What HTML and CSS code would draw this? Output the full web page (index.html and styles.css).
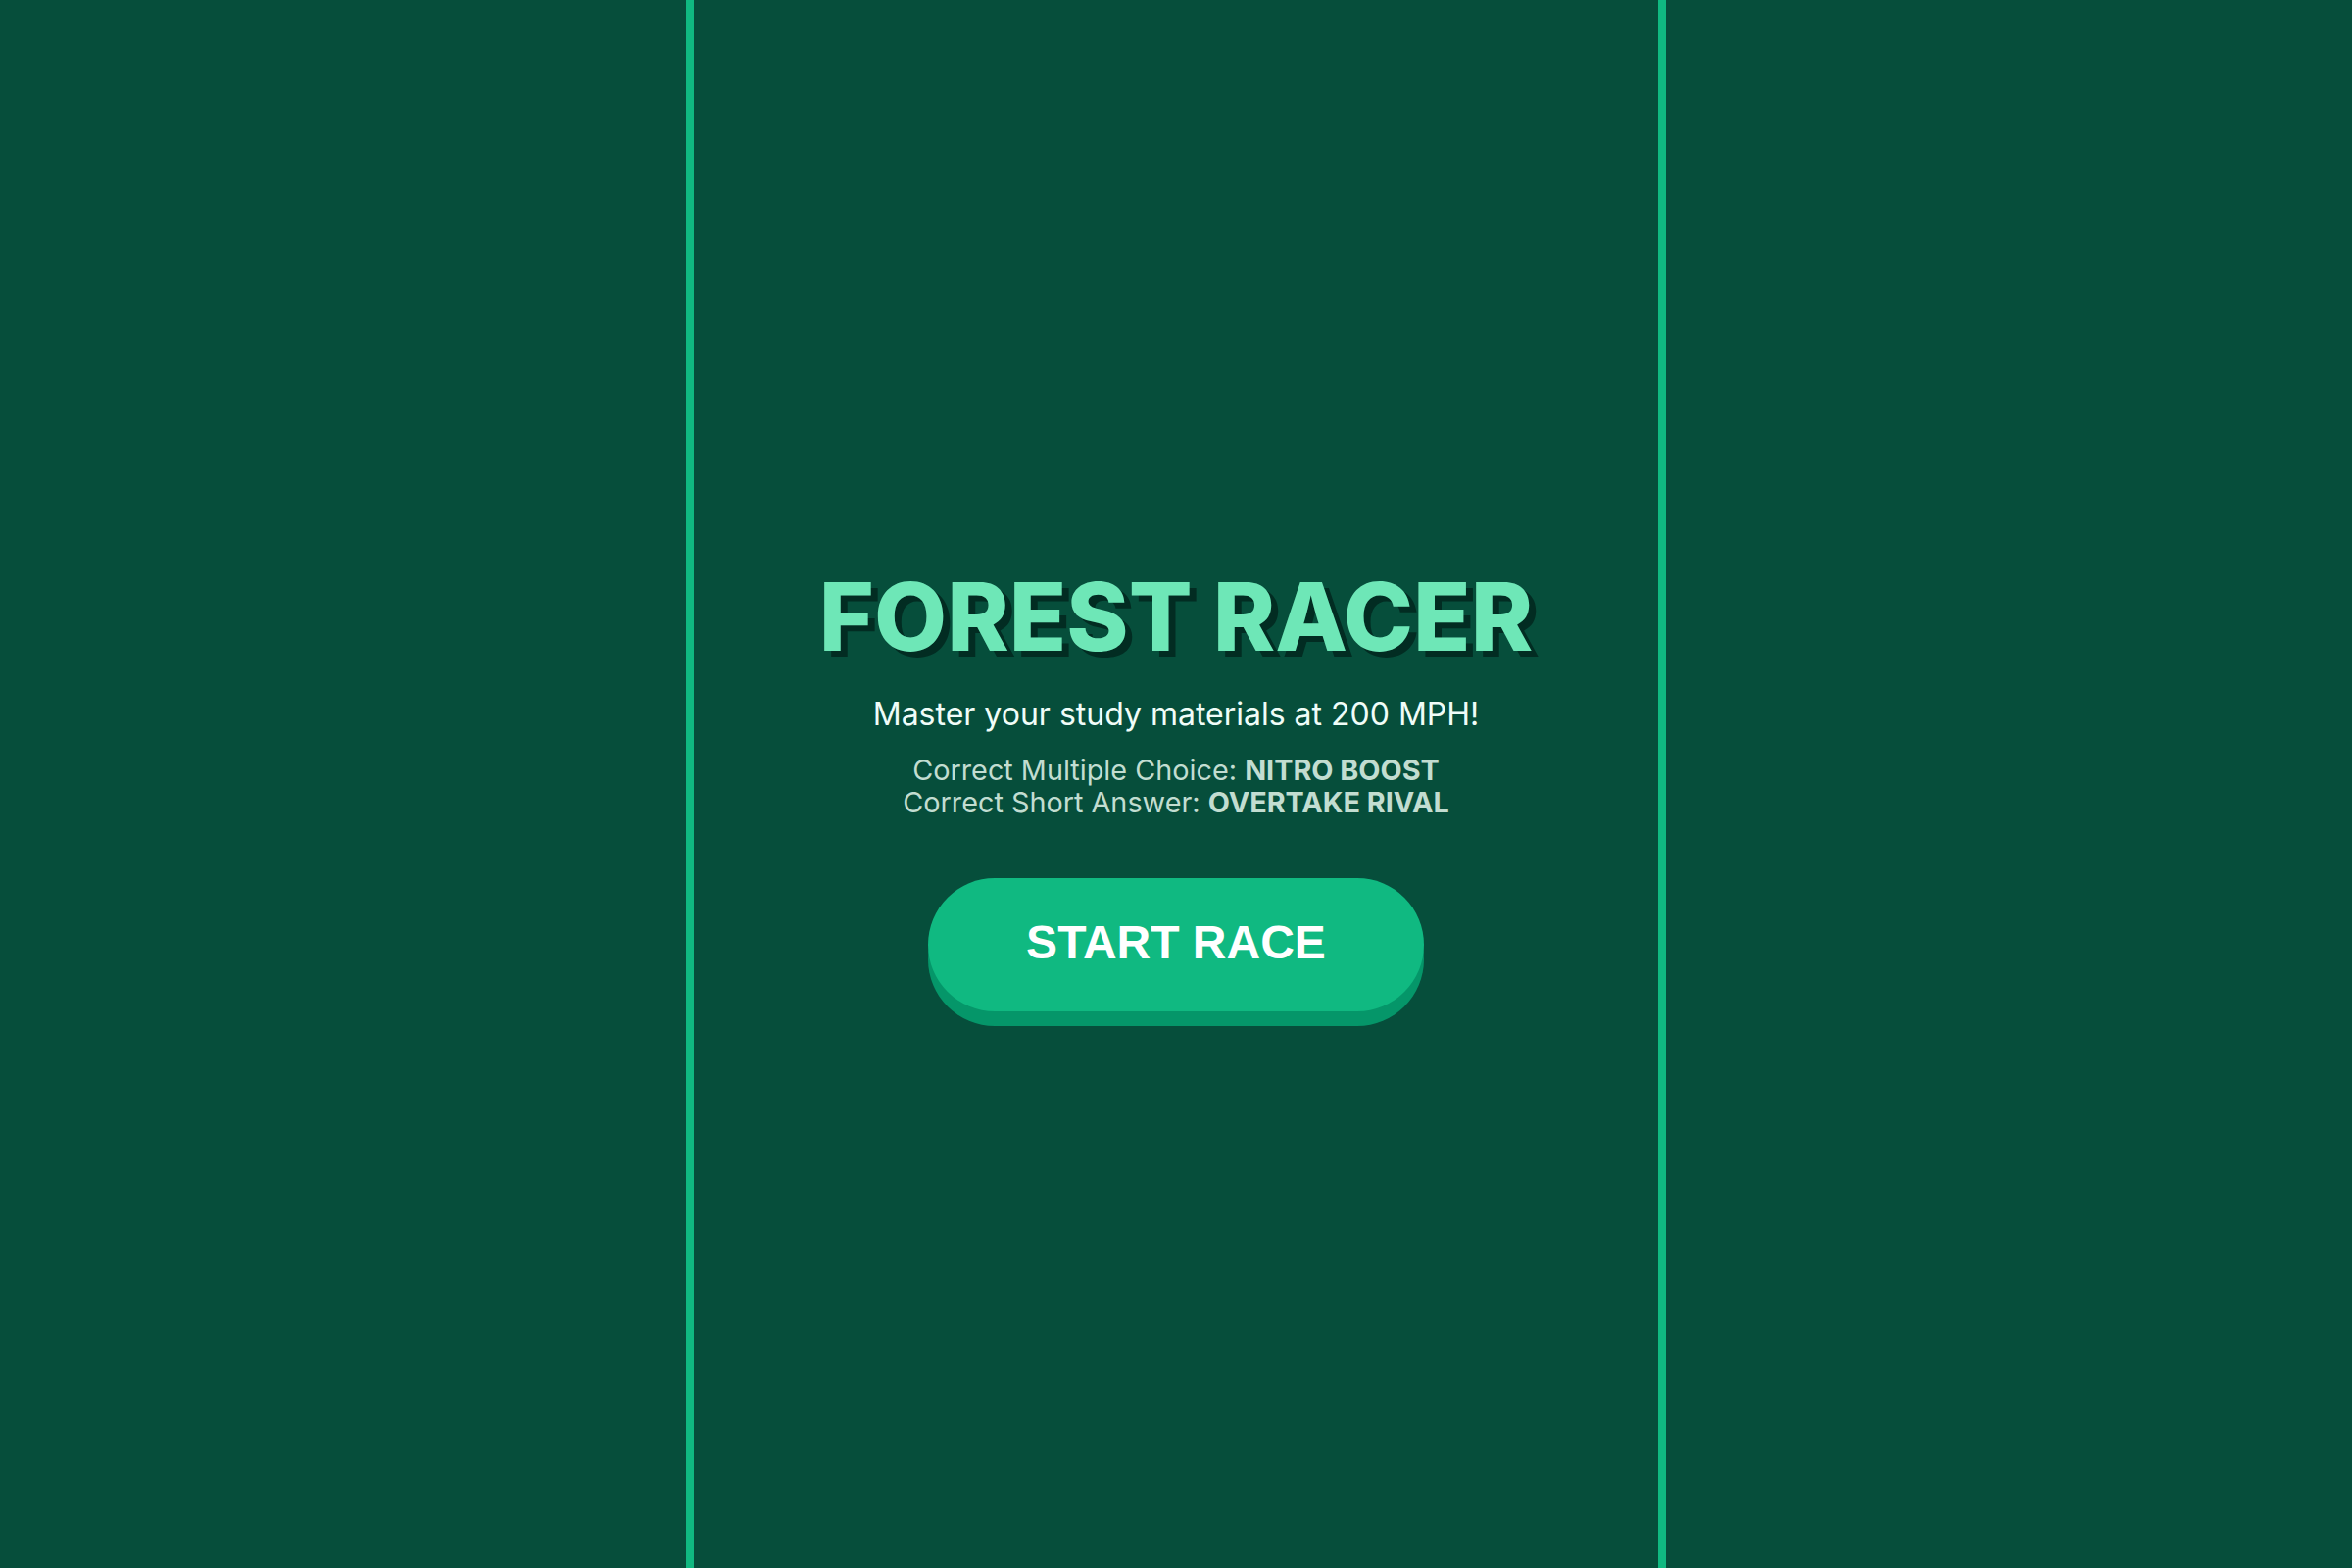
FILE: index.html
```html
<!DOCTYPE html>
<html lang="en">
<head>
<meta charset="utf-8">
<title>Forest Racer</title>
<link rel="stylesheet" href="styles.css">
</head>
<body>
<main class="track">
  <section class="intro">
    <h1 class="title">FOREST RACER</h1>
    <p class="subtitle">Master your study materials at 200 MPH!</p>
    <p class="rules">Correct Multiple Choice: <strong>NITRO BOOST</strong><br>Correct Short Answer: <strong>OVERTAKE RIVAL</strong></p>
    <button class="start-btn" type="button">START RACE</button>
  </section>
</main>
</body>
</html>
```

FILE: styles.css
```css
html, body {
  margin: 0;
  padding: 0;
  height: 100%;
}

body {
  background: #064e3b;
  font-family: Inter, "Noto Sans", sans-serif;
  overflow: hidden;
}

.track {
  box-sizing: border-box;
  width: 1000px;
  height: 100vh;
  margin: 0 auto;
  border-left: 8px solid #10b981;
  border-right: 8px solid #10b981;
  display: flex;
  align-items: center;
  justify-content: center;
}

.intro {
  display: flex;
  flex-direction: column;
  align-items: center;
  text-align: center;
  padding-top: 3px;
}

.title {
  margin: 0;
  font-size: 96px;
  font-weight: 800;
  line-height: 116px;
  color: #6ee7b7;
  text-shadow: 7px 6px 0 #022c22;
}

.subtitle {
  margin: 22px 0 0;
  font-size: 32px;
  line-height: 39px;
  color: #f0fdf8;
}

.rules {
  margin: 22px 0 0;
  font-size: 28.8px;
  line-height: 32.6px;
  color: #c2ddd1;
}

.rules strong {
  font-weight: 700;
}

.start-btn {
  margin-top: 61px;
  padding: 38px 100px 42px;
  border: 0;
  border-radius: 68px;
  background: #10b981;
  color: #ffffff;
  font-family: "Liberation Sans", Arial, sans-serif;
  font-size: 48px;
  font-weight: 700;
  line-height: 56px;
  box-shadow: 0 15px 0 #059669;
  cursor: pointer;
}
```
